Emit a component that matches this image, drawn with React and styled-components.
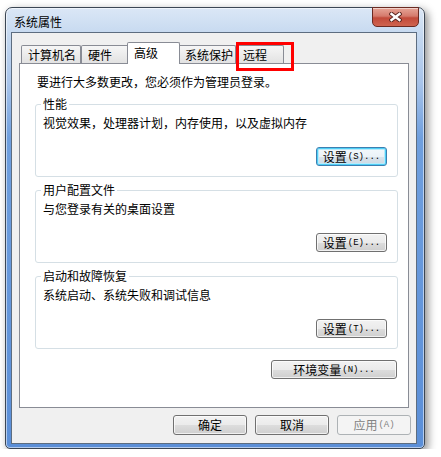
import React from 'react';
import styled, { createGlobalStyle } from 'styled-components';

const GlobalStyle = createGlobalStyle`
  * { box-sizing: border-box; }
  body {
    margin: 0;
    background: #fff;
    font-family: "Noto Sans CJK SC", "Noto Sans", sans-serif;
    font-size: 12px;
    color: #000;
  }
`;

const Page = styled.div`
  padding: 7px 0 0 5px;
`;

const Window = styled.div`
  width: 420px;
  height: 442px;
  display: flex;
  flex-direction: column;
  border: 1px solid #3b4654;
  border-radius: 7px 7px 5px 5px;
  background: linear-gradient(180deg, #dbe7f6 0px, #c3d7ef 30px, #a8c4ea 75px, #6f9fde 130px, #5b8fd8 100%);
  box-shadow: inset 0 0 0 1px rgba(255, 255, 255, 0.55), 3px 3px 8px rgba(0, 0, 0, 0.45);
`;

const TitleBar = styled.div`
  height: 24px;
  flex-shrink: 0;
  display: flex;
  justify-content: space-between;
  align-items: flex-start;
  padding-left: 8px;
`;

const Title = styled.div`
  padding-top: 7px;
  line-height: 14px;
`;

const CloseButton = styled.div`
  width: 47px;
  height: 20px;
  margin: -1px 5px 0 0;
  display: flex;
  align-items: center;
  justify-content: center;
  border: 1px solid #6b2a22;
  border-radius: 0 0 5px 5px;
  background: linear-gradient(180deg, #e6a597 0%, #d57a6c 45%, #c24a3a 55%, #cf6450 100%);
  box-shadow: inset 0 1px 0 rgba(255, 255, 255, 0.5);
`;

const Body = styled.div`
  flex: 1;
  display: flex;
  padding: 0 7px 4px 5px;
`;

const Content = styled.div`
  flex: 1;
  display: flex;
  flex-direction: column;
  border: 1px solid #5d6d80;
  background: #f0f0f0;
  padding: 9px 7px 8px;
`;

const TabStrip = styled.div`
  height: 21px;
  flex-shrink: 0;
  display: flex;
  align-items: flex-end;
  padding-left: 2px;
  position: relative;
  z-index: 1;
`;

const Tab = styled.div`
  position: relative;
  width: ${p => (p.$active ? p.$w + 4 : p.$w)}px;
  height: ${p => (p.$active ? 22 : 18)}px;
  margin: ${p => (p.$active ? '0 -2px -1px' : '0')};
  padding: ${p => (p.$active ? '3px' : '2px')} 0 0 6px;
  line-height: 14px;
  white-space: nowrap;
  border: 1px solid #898c95;
  border-bottom: none;
  border-radius: 2px 2px 0 0;
  background: ${p => (p.$active ? '#fff' : 'linear-gradient(180deg, #f6f6f6 0%, #ececec 50%, #e2e2e2 100%)')};
  z-index: ${p => (p.$active ? 2 : 0)};
`;

const Highlight = styled.div`
  position: absolute;
  left: -1px;
  top: -4px;
  width: 58px;
  height: 29px;
  border: 3px solid #f00;
  z-index: 3;
`;

const Panel = styled.div`
  flex: 1;
  display: flex;
  flex-direction: column;
  background: #fff;
  border: 1px solid #898c95;
  padding: 11px 10px 0 15px;
`;

const Intro = styled.div`
  line-height: 14px;
  margin: 0 0 8px 2px;
`;

const Group = styled.fieldset`
  margin: 0 0 6px;
  min-width: 0;
  padding: 5px 10px 10px 7px;
  border: 1px solid #d5dfe5;
  border-radius: 3px;
`;

const Legend = styled.legend`
  padding: 0 2px;
  margin-left: -2px;
  line-height: 14px;
`;

const GroupText = styled.div`
  line-height: 14px;
`;

const ButtonLine = styled.div`
  display: flex;
  justify-content: flex-end;
  margin: ${p => p.$mt || 0}px ${p => p.$mr || 0}px 0 0;
`;

const Button = styled.div`
  width: ${p => p.$w}px;
  height: ${p => p.$h || 19}px;
  display: flex;
  align-items: center;
  justify-content: center;
  line-height: 14px;
  white-space: nowrap;
  border: 1px solid ${p => (p.$disabled ? '#adb2b5' : p.$default ? '#3c7fb1' : '#707070')};
  border-radius: 3px;
  color: ${p => (p.$disabled ? '#838383' : '#000')};
  background: ${p =>
    p.$disabled
      ? '#f4f4f4'
      : p.$default
      ? 'linear-gradient(180deg, #f4f9fc 0%, #ebf2f7 50%, #dae4ec 51%, #ccd9e3 100%)'
      : 'linear-gradient(180deg, #f2f2f2 0%, #ebebeb 50%, #dddddd 51%, #cfcfcf 100%)'};
  box-shadow: ${p =>
    p.$disabled
      ? 'none'
      : p.$default
      ? 'inset 0 0 0 1px #4fcff6, inset 0 0 0 2px #b8eafb'
      : 'inset 0 0 0 1px rgba(255, 255, 255, 0.7)'};
`;

const Key = styled.span`
  font-family: "Liberation Mono", "DejaVu Sans Mono", monospace;
  font-size: 9px;
  margin-left: 1px;
`;

const ButtonRow = styled.div`
  display: flex;
  justify-content: flex-end;
  gap: 8px;
  margin: 7px -2px 0 0;
`;

const tabs = [
  { label: '计算机名', w: 60 },
  { label: '硬件', w: 48 },
  { label: '高级', w: 49, active: true },
  { label: '系统保护', w: 58 },
  { label: '远程', w: 48, marked: true },
];

const groups = [
  { title: '性能', text: '视觉效果，处理器计划，内存使用，以及虚拟内存', key: '(S)...', def: true },
  { title: '用户配置文件', text: '与您登录有关的桌面设置', key: '(E)...' },
  { title: '启动和故障恢复', text: '系统启动、系统失败和调试信息', key: '(T)...' },
];

const CloseIcon = () => (
  <svg width="13" height="10" viewBox="0 0 13 10">
    <path d="M2.5 2 L10.5 8 M10.5 2 L2.5 8" stroke="#5a2620" strokeWidth="4.4" strokeLinecap="square" fill="none" />
    <path d="M2.5 2 L10.5 8 M10.5 2 L2.5 8" stroke="#fff" strokeWidth="2.4" strokeLinecap="square" fill="none" />
  </svg>
);

export default function App() {
  return (
    <Page>
      <GlobalStyle />
      <Window>
        <TitleBar>
          <Title>系统属性</Title>
          <CloseButton>
            <CloseIcon />
          </CloseButton>
        </TitleBar>
        <Body>
          <Content>
            <TabStrip>
              {tabs.map(t => (
                <Tab key={t.label} $w={t.w} $active={t.active}>
                  {t.label}
                  {t.marked && <Highlight />}
                </Tab>
              ))}
            </TabStrip>
            <Panel>
              <Intro>要进行大多数更改，您必须作为管理员登录。</Intro>
              {groups.map(g => (
                <Group key={g.title}>
                  <Legend>{g.title}</Legend>
                  <GroupText>{g.text}</GroupText>
                  <ButtonLine $mt={17}>
                    <Button $w={71} $default={g.def}>
                      设置<Key>{g.key}</Key>
                    </Button>
                  </ButtonLine>
                </Group>
              ))}
              <ButtonLine $mt={5} $mr={1}>
                <Button $w={126}>
                  环境变量<Key>(N)...</Key>
                </Button>
              </ButtonLine>
            </Panel>
            <ButtonRow>
              <Button $w={74} $h={20}>确定</Button>
              <Button $w={74} $h={20}>取消</Button>
              <Button $w={74} $h={20} $disabled>
                应用<Key>(A)</Key>
              </Button>
            </ButtonRow>
          </Content>
        </Body>
      </Window>
    </Page>
  );
}
